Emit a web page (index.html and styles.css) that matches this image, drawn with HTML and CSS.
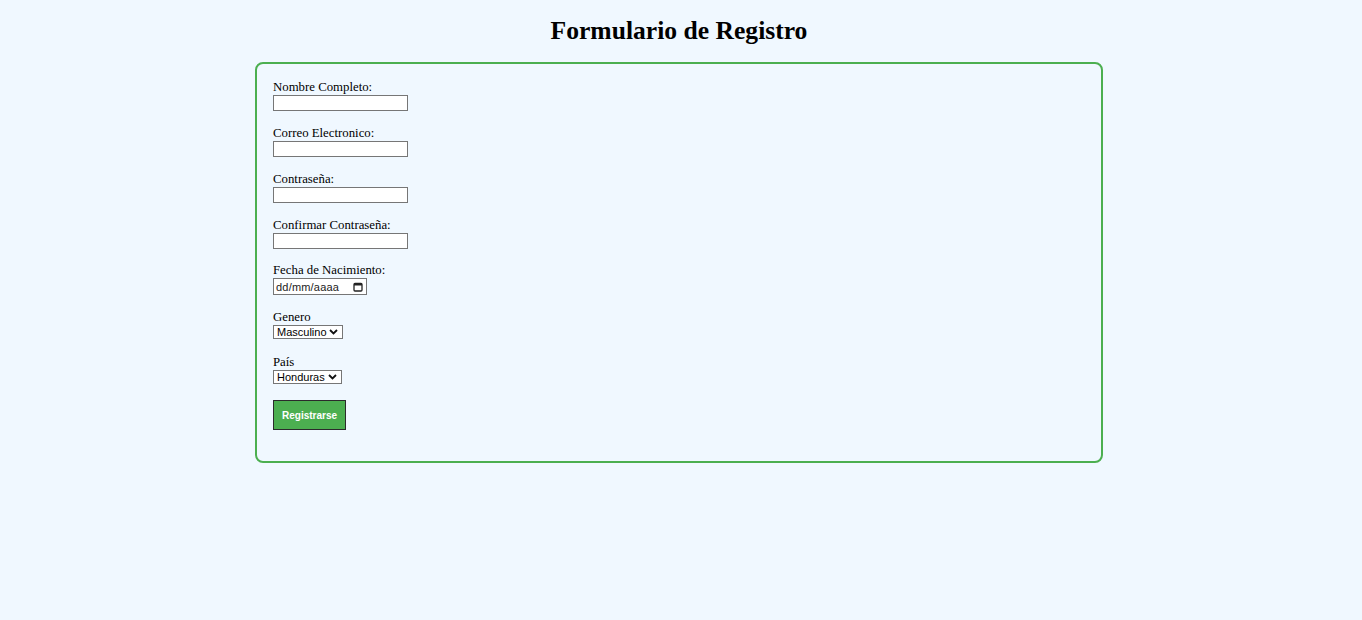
FILE: index.html
```html
<!DOCTYPE html>
<html lang="es">
<head>
<meta charset="utf-8">
<title>Formulario de Registro</title>
<link rel="stylesheet" href="styles.css">
</head>
<body>
<h1 class="title">Formulario de Registro</h1>
<form class="card">
  <div class="group">
    <label class="label" for="nombre">Nombre Completo:</label>
    <input class="field" id="nombre" type="text">
  </div>
  <div class="group">
    <label class="label" for="correo">Correo Electronico:</label>
    <input class="field" id="correo" type="email">
  </div>
  <div class="group">
    <label class="label" for="pass">Contraseña:</label>
    <input class="field" id="pass" type="password">
  </div>
  <div class="group">
    <label class="label" for="pass2">Confirmar Contraseña:</label>
    <input class="field" id="pass2" type="password">
  </div>
  <div class="group group-date">
    <label class="label" for="fecha">Fecha de Nacimiento:</label>
    <div class="date" id="fecha">
      <span class="date-text">dd/mm/aaaa</span>
      <svg class="cal" width="10" height="10" viewBox="0 0 10 10"><rect x="1" y="1.5" width="8" height="7.5" rx="1" fill="none" stroke="#222" stroke-width="1.3"/><rect x="1" y="1.5" width="8" height="2" fill="#222"/></svg>
    </div>
  </div>
  <div class="group">
    <label class="label" for="genero">Genero</label>
    <span class="select-wrap">
      <select class="select sel-genero" id="genero">
        <option>Masculino</option>
        <option>Femenino</option>
      </select>
      <svg class="chev" width="9" height="6" viewBox="0 0 9 6"><path d="M1 1 L4.5 4.5 L8 1" fill="none" stroke="#111" stroke-width="1.8"/></svg>
    </span>
  </div>
  <div class="group group-pais">
    <label class="label" for="pais">País</label>
    <span class="select-wrap">
      <select class="select sel-pais" id="pais">
        <option>Honduras</option>
        <option>Guatemala</option>
      </select>
      <svg class="chev" width="9" height="6" viewBox="0 0 9 6"><path d="M1 1 L4.5 4.5 L8 1" fill="none" stroke="#111" stroke-width="1.8"/></svg>
    </span>
  </div>
  <button class="btn" type="submit">Registrarse</button>
</form>
</body>
</html>
```
FILE: styles.css
```css
html, body {
  margin: 0;
  padding: 0;
}
body {
  background: #f0f8ff;
  font-family: "Liberation Serif", "Times New Roman", serif;
  color: #000;
  padding: 0 10px 0 6px;
  height: 620px;
  overflow: hidden;
}
.title {
  font-size: 25.6px;
  font-weight: bold;
  text-align: center;
  margin: 0;
  padding: 16px 0 17px;
  line-height: 29px;
}
.card {
  box-sizing: border-box;
  width: 848px;
  margin: 0 auto;
  border: 2px solid #4caf50;
  border-radius: 8px;
  padding: 16px 16px 31px;
  display: flex;
  flex-direction: column;
  align-items: flex-start;
}
.group {
  display: flex;
  flex-direction: column;
  align-items: flex-start;
  margin-bottom: 15px;
}
.group-date {
  margin-top: -1px;
}
.group-pais {
  margin-top: 1px;
}
.label {
  font-size: 12.8px;
  line-height: 15px;
}
.field {
  box-sizing: border-box;
  width: 135px;
  height: 16px;
  border: 1px solid #767676;
  background: #fff;
  margin: 0;
  padding: 0 2px;
  border-radius: 0;
  font-size: 11px;
}
.date {
  box-sizing: border-box;
  width: 94px;
  height: 17px;
  border: 1px solid #767676;
  background: #fff;
  display: flex;
  align-items: center;
  justify-content: space-between;
  padding: 0 3px 0 2px;
}
.date-text {
  font-family: "Liberation Sans", Arial, sans-serif;
  font-size: 11px;
  color: #222;
  letter-spacing: 0.2px;
}
.select-wrap {
  position: relative;
  display: inline-flex;
}
.select {
  box-sizing: border-box;
  height: 14px;
  font-family: "Liberation Sans", Arial, sans-serif;
  font-size: 11px;
  line-height: 12px;
  color: #000;
  border: 1px solid #767676;
  border-radius: 0;
  background: #fff;
  padding: 0 0 0 3px;
  margin: 0;
  -webkit-appearance: none;
  appearance: none;
}
.sel-genero { width: 70px; }
.sel-pais { width: 69px; }
.chev {
  position: absolute;
  right: 5px;
  top: 4px;
  pointer-events: none;
}
.btn {
  box-sizing: border-box;
  width: 73px;
  height: 30px;
  margin: 1px 0 0;
  background: #4caf50;
  color: #fff;
  border: 1px solid #2b2b2b;
  font-family: "Liberation Sans", Arial, sans-serif;
  font-size: 10px;
  font-weight: bold;
  padding: 0;
  border-radius: 0;
}
```
